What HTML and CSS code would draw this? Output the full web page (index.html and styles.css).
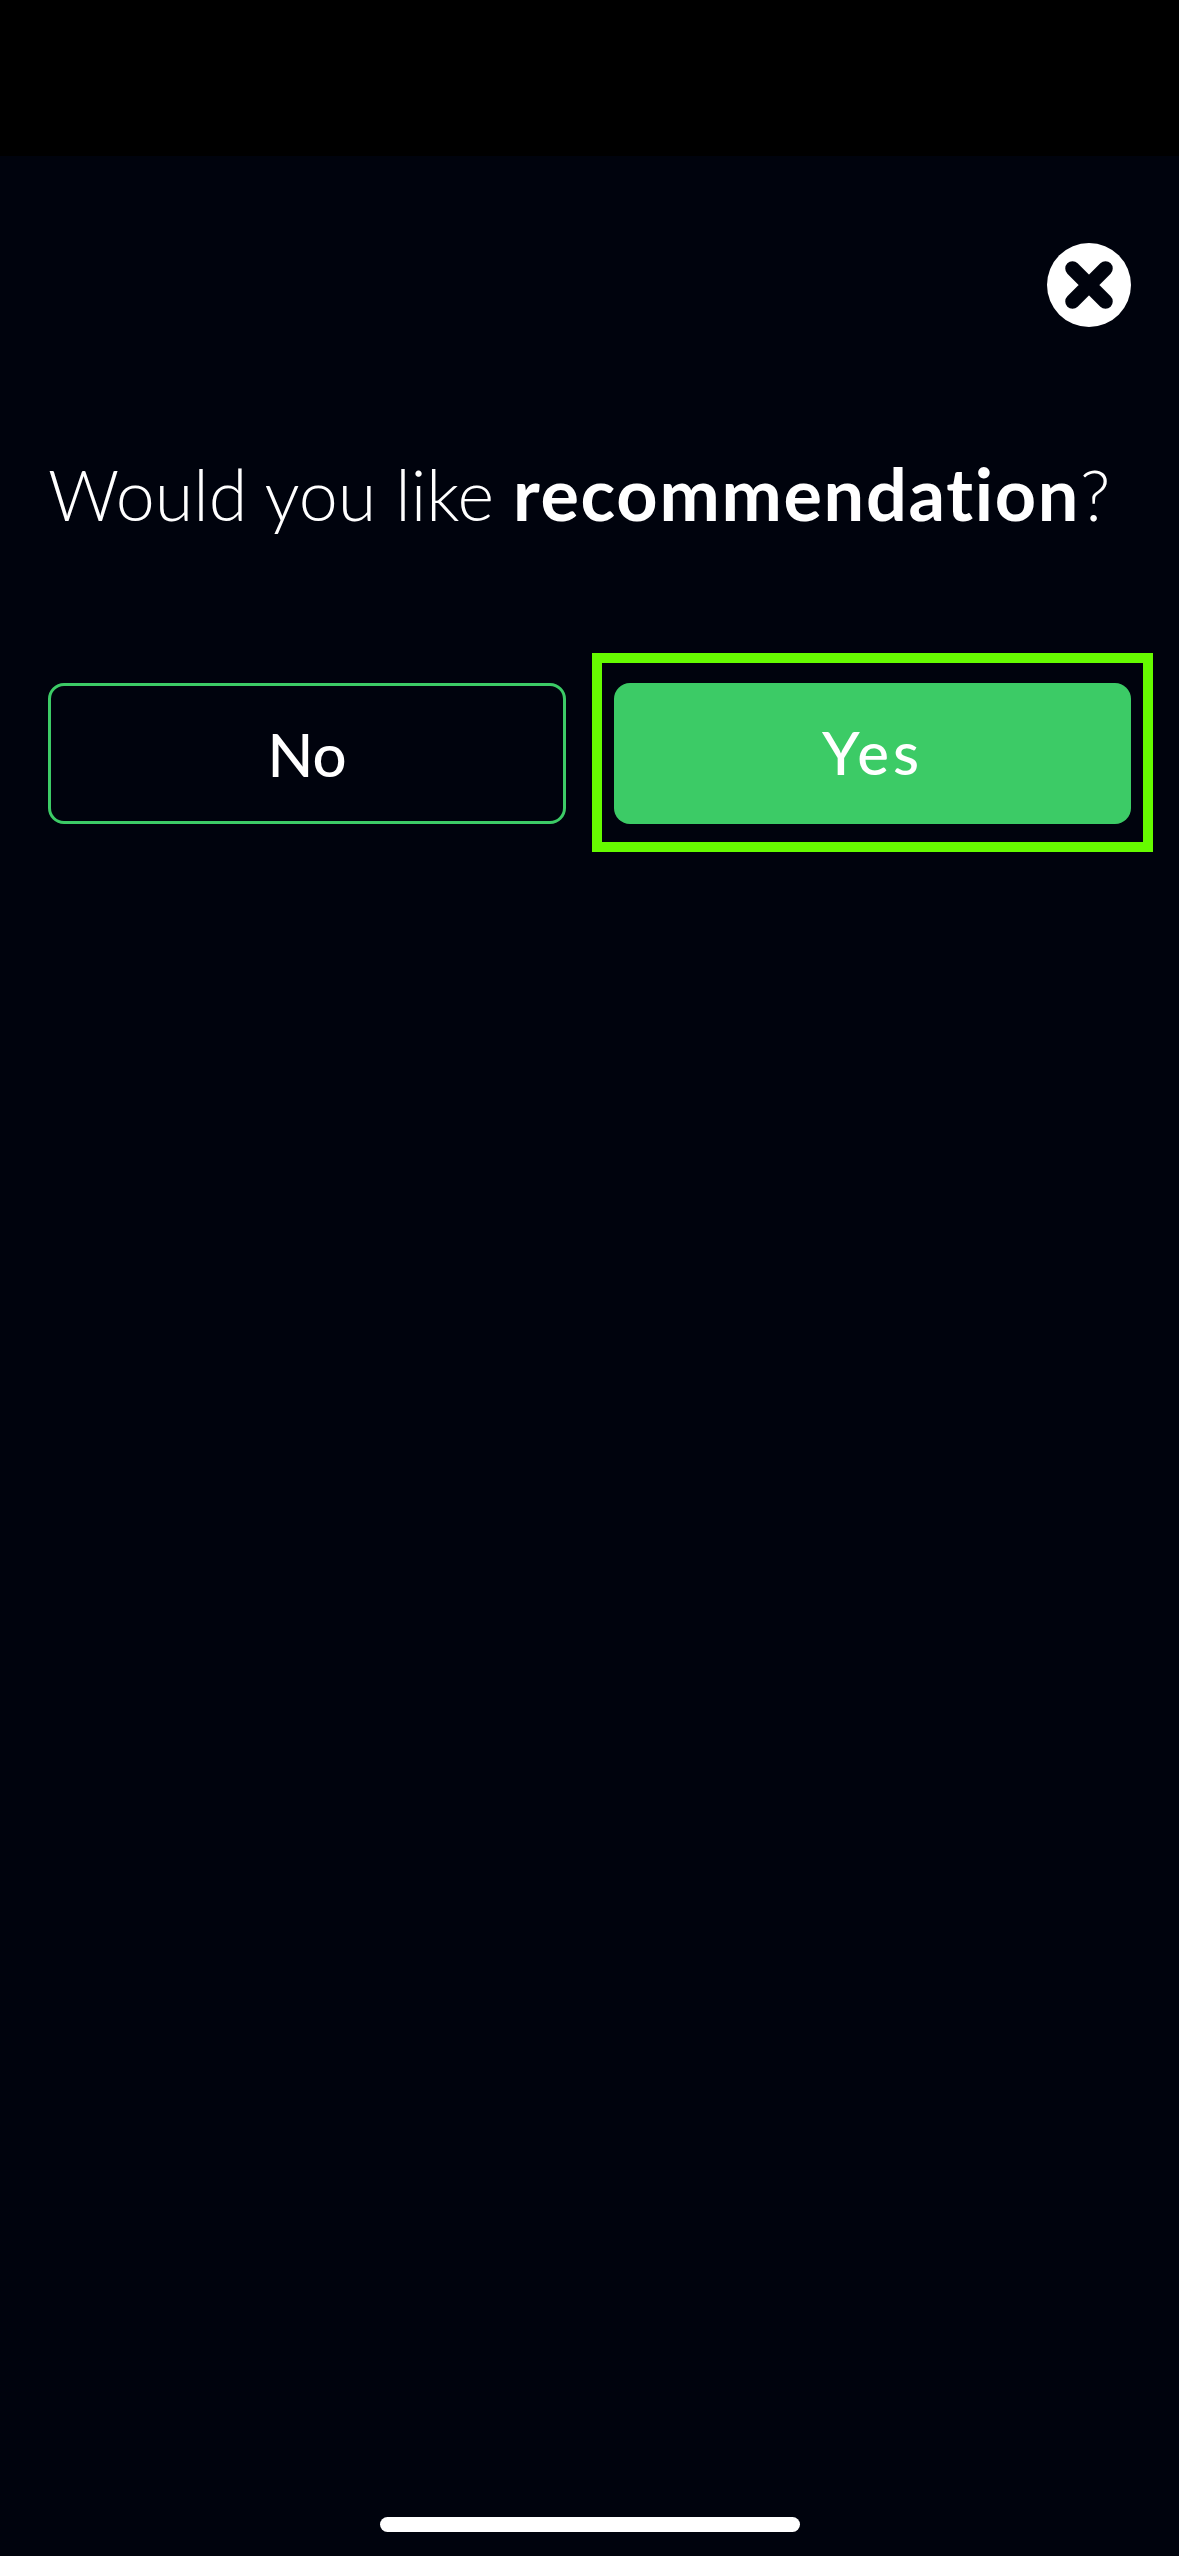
FILE: index.html
```html
<!DOCTYPE html>
<html lang="en">
<head>
    <meta charset="UTF-8">
    <meta name="viewport" content="width=device-width, initial-scale=1.0">
    <title>Recommendation prompt</title>
    <link rel="stylesheet" href="styles.css">
</head>
<body>
    <div class="status-bar"></div>
    <main class="prompt">
        <div class="close-row">
            <button class="close-button" aria-label="Close">
                <svg viewBox="0 0 84 84" width="84" height="84" aria-hidden="true">
                    <circle cx="42" cy="42" r="42" fill="#fff"/>
                    <path d="M25.5 25.5 L58.5 58.5 M58.5 25.5 L25.5 58.5" stroke="#00030d" stroke-width="14.5" stroke-linecap="round"/>
                </svg>
            </button>
        </div>
        <h1 class="question">Would you like <strong>recommendation</strong>?</h1>
        <div class="answers">
            <button class="answer answer-no">No</button>
            <button class="answer answer-yes">Yes</button>
        </div>
    </main>
    <div class="home-row">
        <div class="home-bar"></div>
    </div>
</body>
</html>
```

FILE: styles.css
```css
html, body {
    margin: 0;
    padding: 0;
}

body {
    display: flex;
    flex-direction: column;
    width: 1179px;
    height: 2556px;
    overflow: hidden;
    background-color: #00030d;
    color: #fff;
    font-family: Lato, "Noto Sans", sans-serif;
}

.status-bar {
    height: 156px;
    background-color: #000;
}

.prompt {
    flex: 1;
    padding: 87px 48px 0;
}

.close-row {
    display: flex;
    justify-content: flex-end;
}

.close-button {
    display: block;
    width: 84px;
    height: 84px;
    padding: 0;
    border: none;
    background: none;
}

.close-button svg {
    display: block;
}

.question {
    margin: 120px 0 0;
    font-size: 70px;
    line-height: 92px;
    font-weight: 300;
    white-space: nowrap;
    font-variant-ligatures: none;
}

.question strong {
    font-size: 72px;
    font-weight: 700;
    letter-spacing: 1.7px;
}

/* Answer buttons */
.answers {
    display: grid;
    grid-template-columns: 518px 517px;
    gap: 48px;
    margin-top: 143px;
}

.answer {
    position: relative;
    height: 141px;
    padding: 0;
    border-radius: 16px;
    color: #fff;
    font-family: inherit;
    font-size: 60px;
    font-weight: 500;
}

.answer-no {
    border: 3px solid #3ccb66;
    background: none;
}

.answer-yes {
    border: none;
    background-color: #3ccb66;
    padding-bottom: 4px;
    letter-spacing: 4px;
}

/* Focus frame around the selected answer */
.answer-yes::after {
    content: "";
    position: absolute;
    inset: -30px -22px -28px -22px;
    border: 10px solid #66fb00;
}

.home-row {
    display: flex;
    justify-content: center;
    padding-bottom: 24px;
}

.home-bar {
    width: 420px;
    height: 15px;
    border-radius: 8px;
    background-color: #fff;
}
```
